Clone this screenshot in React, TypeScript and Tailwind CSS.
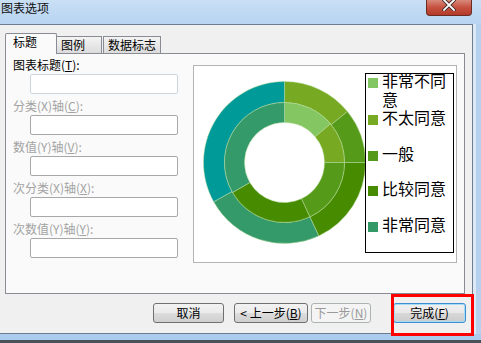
import React from 'react';

type Seg = { from: number; to: number; color: string };

const outerRing: Seg[] = [
  { from: 0, to: 51, color: '#77aa22' },
  { from: 51, to: 90, color: '#559a18' },
  { from: 90, to: 155, color: '#478b00' },
  { from: 155, to: 241, color: '#349a6a' },
  { from: 241, to: 360, color: '#009a99' },
];

const innerRing: Seg[] = [
  { from: 0, to: 50, color: '#84c662' },
  { from: 50, to: 90, color: '#77aa22' },
  { from: 90, to: 155, color: '#559a18' },
  { from: 155, to: 240, color: '#478b00' },
  { from: 240, to: 360, color: '#349a6a' },
];

const legend = [
  { label: '非常不同意', color: '#82c664' },
  { label: '不太同意', color: '#77aa22' },
  { label: '一般', color: '#559a18' },
  { label: '比较同意', color: '#478b00' },
  { label: '非常同意', color: '#339966' },
];

function arcPath(cx: number, cy: number, r0: number, r1: number, a0: number, a1: number) {
  const rad = (a: number) => ((a - 90) * Math.PI) / 180;
  const pt = (r: number, a: number) => [cx + r * Math.cos(rad(a)), cy + r * Math.sin(rad(a))];
  const large = a1 - a0 > 180 ? 1 : 0;
  const [x0, y0] = pt(r1, a0);
  const [x1, y1] = pt(r1, a1);
  const [x2, y2] = pt(r0, a1);
  const [x3, y3] = pt(r0, a0);
  return `M${x0} ${y0} A${r1} ${r1} 0 ${large} 1 ${x1} ${y1} L${x2} ${y2} A${r0} ${r0} 0 ${large} 0 ${x3} ${y3}Z`;
}

function Donut() {
  const c = 81.5;
  return (
    <svg width="163" height="163" viewBox="0 0 163 163" className="shrink-0">
      {outerRing.map((s) => (
        <path key={'o' + s.from} d={arcPath(c, c, 60, 81, s.from, s.to)} fill={s.color} stroke="#b9dca0" strokeWidth="0.5" />
      ))}
      {innerRing.map((s) => (
        <path key={'i' + s.from} d={arcPath(c, c, 40, 60, s.from, s.to)} fill={s.color} stroke="#b9dca0" strokeWidth="0.5" />
      ))}
    </svg>
  );
}

function Field({ label, hotkey, enabled }: { label: string; hotkey: string; enabled?: boolean }) {
  return (
    <div className="mb-[5px]">
      <div className={`h-[14px] leading-[14px] text-[12px] whitespace-nowrap ${enabled ? 'text-black' : 'text-[#a3a3a3]'}`}>
        {label}(<span className="underline">{hotkey}</span>):
      </div>
      <div
        className={`mt-[2px] ml-[17px] w-[148px] h-[20px] bg-white rounded-[2px] border ${
          enabled ? 'border-[#ccd5de]' : 'border-[#a8a8a8]'
        }`}
      />
    </div>
  );
}

const btn =
  'h-[20px] flex items-center justify-center text-[12px] leading-[14px] rounded-[3px] border border-[#707070] bg-[linear-gradient(to_bottom,#f2f2f2_0%,#ebebeb_50%,#dddddd_51%,#cfcfcf_100%)] text-black';

export default function App() {
  return (
    <div className="relative w-[481px] h-[343px] overflow-hidden bg-[#f0f0f0] font-['Noto_Sans_CJK_SC','Liberation_Sans',sans-serif]">
      {/* title bar */}
      <div className="h-[24px] flex items-start bg-[linear-gradient(to_bottom,#c9e0f5,#b7d4f1)]">
        <div className="ml-[1px] mt-[1px] text-[12px] leading-[14px] text-[#101010]">图表选项</div>
        <div className="ml-auto mr-[9px] w-[46px] h-[16px] rounded-b-[4px] border border-t-0 border-[#6b2a22] bg-[linear-gradient(to_bottom,#d88a7c,#c7503f_50%,#b23a2a)] flex justify-center">
          <svg width="14" height="11" viewBox="0 0 14 11">
            <path d="M2 0 L12 10 M12 0 L2 10" stroke="#3a2a2a" strokeWidth="3.6" strokeLinecap="square" />
            <path d="M2 0 L12 10 M12 0 L2 10" stroke="#ffffff" strokeWidth="1.8" strokeLinecap="square" />
          </svg>
        </div>
      </div>

      <div className="flex h-[310px]">
        {/* dialog client */}
        <div className="w-[473px] h-[310px] border-t border-r border-b border-[#6f7e8e] bg-[#f0f0f0]">
          {/* tabs */}
          <div className="flex items-start h-[20px] mt-[8px] ml-[5px]">
            <div className="relative z-10 w-[52px] h-[21px] border border-b-0 border-[#898c95] bg-[#fafafa] pl-[7px] pt-[1px] text-[12px] leading-[14px] rounded-t-[2px]">
              标题
            </div>
            <div className="mt-[3px] w-[45px] h-[17px] border border-b-0 border-l-0 border-[#898c95] bg-[linear-gradient(to_bottom,#f4f4f4,#dcdcdc)] pl-[4px] pt-[1px] text-[12px] leading-[14px]">
              图例
            </div>
            <div className="mt-[3px] ml-[1px] w-[58px] h-[17px] border border-b-0 border-[#898c95] bg-[linear-gradient(to_bottom,#f4f4f4,#dcdcdc)] pl-[4px] pt-[1px] text-[12px] leading-[14px]">
              数据标志
            </div>
          </div>

          {/* panel */}
          <div className="ml-[5px] w-[460px] h-[241px] border border-[#898c95] bg-[#fafafa] flex items-start">
            <div className="pl-[7px] pt-[4px] w-[172px]">
              <Field label="图表标题" hotkey="T" enabled />
              <Field label="分类(X)轴" hotkey="C" />
              <Field label="数值(Y)轴" hotkey="V" />
              <Field label="次分类(X)轴" hotkey="X" />
              <Field label="次数值(Y)轴" hotkey="Y" />
            </div>

            <div className="ml-[15px] mt-[11px] w-[264px] h-[198px] border border-[#b4b4b4] bg-white flex items-start">
              <div className="ml-[9px] mt-[15px]">
                <Donut />
              </div>
              <div className="ml-[-1px] mt-[7px] w-[89px] h-[180px] border border-black bg-white pl-[2px]">
                <div className="mt-[-1px] flex flex-col font-['Liberation_Sans','Noto_Sans_CJK_SC',sans-serif]">
                  {legend.map((item, i) => (
                    <div key={item.label} className={`flex items-start ${i >= 2 ? 'mt-[17px]' : ''}`}>
                      <div className="w-[10px] h-[10px] mt-[5px] shrink-0" style={{ backgroundColor: item.color }} />
                      <div className="ml-[4px] w-[70px] text-[16px] leading-[18.5px] text-black break-all">{item.label}</div>
                    </div>
                  ))}
                </div>
              </div>
            </div>
          </div>

          {/* buttons */}
          <div className="flex mt-[9px] ml-[153px]">
            <div className={`${btn} w-[71px]`}>取消</div>
            <div className={`${btn} w-[74px] ml-[10px]`}>
              &lt; 上一步(<span className="underline">B</span>)
            </div>
            <div className="h-[20px] w-[60px] ml-[3px] flex items-center justify-center text-[12px] leading-[14px] rounded-[3px] border border-[#adb2b5] bg-[#f4f4f4] text-[#9a9a9a]">
              下一步(<span className="underline">N</span>)
            </div>
            <div className="h-[20px] w-[73px] ml-[22px] flex items-center justify-center text-[12px] leading-[14px] rounded-[3px] border border-[#3c8fd0] shadow-[inset_0_0_0_1px_#a6dcf6] bg-[linear-gradient(to_bottom,#f0f0f0_0%,#e8e8e8_50%,#d8d8d8_51%,#cccccc_100%)] text-black">
              完成(<span className="underline">F</span>)
            </div>
          </div>
        </div>
        {/* right frame */}
        <div className="flex-1 flex">
          <div className="w-[3px] bg-[#dde9f5]" />
          <div className="flex-1 bg-[#b5d1ee]" />
        </div>
      </div>

      {/* bottom frame */}
      <div className="h-[6px] bg-[#aacbee]" />
      <div className="h-[3px] bg-[#4a5058]" />

      {/* highlight */}
      <div className="absolute left-[391px] top-[294px] w-[83px] h-[42px] border-[3px] border-[#ff0000]" />
    </div>
  );
}
